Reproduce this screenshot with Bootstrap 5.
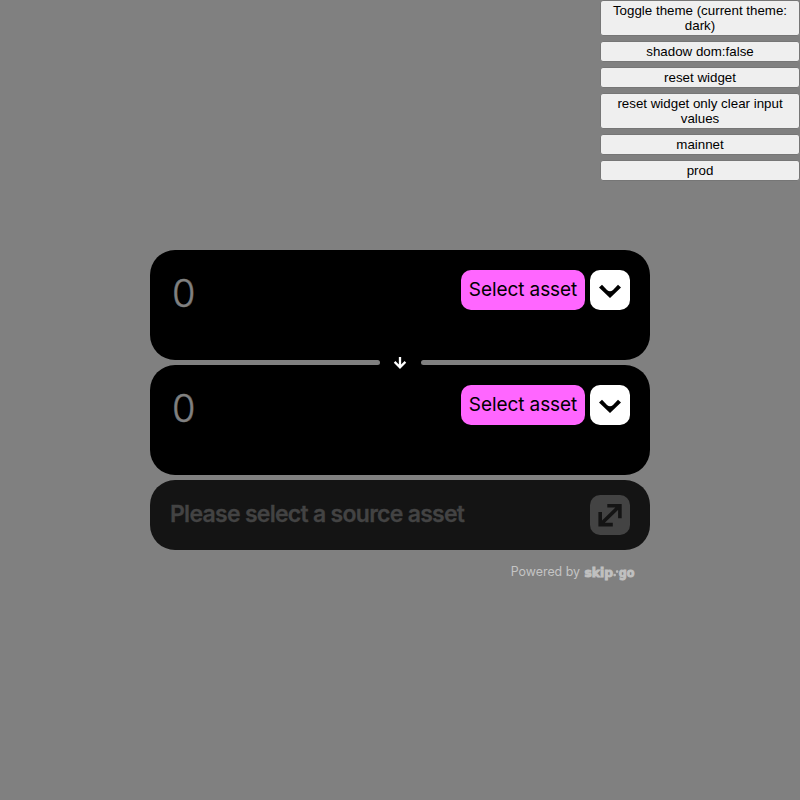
<!DOCTYPE html>
<html lang="en">
<head>
<meta charset="utf-8">
<meta name="viewport" content="width=device-width, initial-scale=1">
<title>Skip Go widget</title>
<link href="https://cdn.jsdelivr.net/npm/bootstrap@5.3.0/dist/css/bootstrap.min.css" rel="stylesheet">
<style>
body { background: #808080; height: 800px; overflow: hidden; font-family: Inter, "Liberation Sans", sans-serif; }
.controls { width: 200px; height: 250px; gap: 5px; }
.controls button { font: 13.333px/15px "Liberation Sans", Arial, sans-serif; color: #000; background: #efefef; border: 1px solid #767676; border-radius: 3px; padding: 2px 7px; }
.widget { width: 500px; gap: 5px; }
.asset-box { height: 110px; border-radius: 25px; background: #000; padding: 20px; }
.asset-actions { gap: 5px; }
.amount { font-size: 38px; font-weight: 300; line-height: 46px; width: 100px; padding: 0 0 0 2px; color: #808080; background: none; border: 0; outline: 0; -webkit-text-stroke: .4px #808080; }
.amount::placeholder { color: #808080; opacity: 1; }
.pick { width: 124px; height: 40px; border-radius: 10px; background: #ff66ff; color: #000; font-size: 19px; letter-spacing: -.08px; line-height: 37px; padding: 0 0 1px; border: 0; }
.chevron { width: 40px; height: 40px; border-radius: 10px; background: #fff; padding: 0; border: 0; }
.swap { width: 47px; height: 25px; margin: -15px 0; background: #000; border: 0; padding: 0; z-index: 1; }
.swap::before, .swap::after { content: ""; position: absolute; top: 10px; width: 8px; height: 5px; border-radius: 2.5px; background: #808080; }
.swap::before { left: -5px; }
.swap::after { right: -5px; }
.submit { height: 70px; border-radius: 25px; background: #141414; color: #434343; font-size: 23px; font-weight: 600; letter-spacing: -.72px; padding: 0 20px; border: 0; }
.submit span { padding-bottom: 1px; -webkit-text-stroke: .3px #434343; }
.powered { color: #c4c4c4; font-size: 12.4px; line-height: 20px; margin-top: 7px; padding-right: 15px; gap: 4px; }
.powered svg { overflow: visible; }
</style>
<script src="https://cdn.jsdelivr.net/npm/bootstrap@5.3.0/dist/js/bootstrap.bundle.min.js"></script>
</head>
<body>
<div class="controls d-flex flex-column align-items-stretch ms-auto">
  <button>Toggle theme (current theme: dark)</button>
  <button>shadow dom:false</button>
  <button>reset widget</button>
  <button>reset widget only clear input values</button>
  <button>mainnet</button>
  <button>prod</button>
</div>
<main class="widget d-flex flex-column mx-auto">
  <section class="asset-box d-flex justify-content-between align-items-start">
    <input class="amount" placeholder="0" aria-label="Source amount">
    <div class="asset-actions d-flex">
      <button class="pick"><span>Select asset</span></button>
      <button class="chevron d-flex" aria-label="Source chain"><svg width="40" height="40" viewBox="0 0 40 40"><path d="M12 14.8L17 20Q20 22.4 23 20L28 14.8L31 17.5L20 28L9 17.5z"/></svg></button>
    </div>
  </section>
  <button class="swap d-flex align-self-center justify-content-center position-relative" aria-label="Swap"><svg width="42" height="25" viewBox="0 0 42 25"><path d="M21 7V17M15.6 11.9L21 17.3L26.4 11.9" fill="none" stroke="#fff" stroke-width="2.3"/></svg></button>
  <section class="asset-box d-flex justify-content-between align-items-start">
    <input class="amount" placeholder="0" aria-label="Destination amount">
    <div class="asset-actions d-flex">
      <button class="pick"><span>Select asset</span></button>
      <button class="chevron d-flex" aria-label="Destination chain"><svg width="40" height="40" viewBox="0 0 40 40"><path d="M12 14.8L17 20Q20 22.4 23 20L28 14.8L31 17.5L20 28L9 17.5z"/></svg></button>
    </div>
  </section>
  <button class="submit d-flex justify-content-between align-items-center"><span>Please select a source asset</span>
    <svg width="40" height="40" viewBox="0 0 40 40"><rect width="40" height="40" rx="10" fill="#434343"/><path d="M17.3 10.7H29.9V23.2M10.2 16.9V29.6H22.8M29 11.5L11 29" fill="none" stroke="#141414" stroke-width="3.6"/></svg>
  </button>
  <footer class="powered d-flex justify-content-end align-items-center"><span>Powered by</span>
    <svg width="51" height="18" viewBox="0 0 51 18" fill="#c0c0c0" stroke="#c0c0c0" stroke-width=".9" font-family="DejaVu Sans, sans-serif" font-weight="700" font-size="12"><text x="0.5" y="13.5" textLength="28.5" lengthAdjust="spacingAndGlyphs">skip</text><path d="M29.9 11.3h1.5v1.5h-1.5zM32.4 7.8h1.5v1.5h-1.5z"/><text x="34.8" y="13.5" textLength="15.7" lengthAdjust="spacingAndGlyphs">go</text></svg>
  </footer>
</main>
</body>
</html>
